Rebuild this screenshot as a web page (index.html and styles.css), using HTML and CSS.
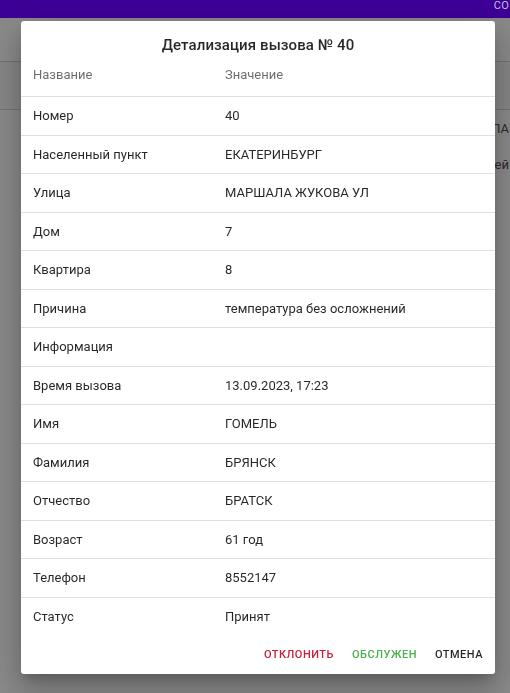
FILE: index.html
```html
<!DOCTYPE html>
<html lang="ru">
<head>
<meta charset="utf-8">
<title>Детализация вызова</title>
<link rel="stylesheet" href="styles.css">
</head>
<body>
<div class="page">
  <header class="appbar"><span class="appbar-user">СО</span></header>
  <div class="toolbar"></div>
  <div class="tabs"></div>
  <div class="bg-list">
    <div class="bg-row">ЛА</div>
    <div class="bg-row">сей</div>
  </div>
</div>

<div class="dialog" role="dialog">
  <h2 class="dialog-title">Детализация вызова № 40</h2>
  <table class="details">
    <thead>
      <tr><th class="col-name">Название</th><th>Значение</th></tr>
    </thead>
    <tbody>
      <tr><td>Номер</td><td>40</td></tr>
      <tr><td>Населенный пункт</td><td>ЕКАТЕРИНБУРГ</td></tr>
      <tr><td>Улица</td><td>МАРШАЛА ЖУКОВА УЛ</td></tr>
      <tr><td>Дом</td><td>7</td></tr>
      <tr><td>Квартира</td><td>8</td></tr>
      <tr><td>Причина</td><td>температура без осложнений</td></tr>
      <tr><td>Информация</td><td></td></tr>
      <tr><td>Время вызова</td><td>13.09.2023, 17:23</td></tr>
      <tr><td>Имя</td><td>ГОМЕЛЬ</td></tr>
      <tr><td>Фамилия</td><td>БРЯНСК</td></tr>
      <tr><td>Отчество</td><td>БРАТСК</td></tr>
      <tr><td>Возраст</td><td>61 год</td></tr>
      <tr><td>Телефон</td><td>8552147</td></tr>
      <tr><td>Статус</td><td>Принят</td></tr>
    </tbody>
  </table>
  <div class="actions">
    <button class="btn btn-reject">Отклонить</button>
    <button class="btn btn-done">Обслужен</button>
    <button class="btn btn-cancel">Отмена</button>
  </div>
</div>
</body>
</html>
```

FILE: styles.css
```css
* { box-sizing: border-box; }

html, body {
  margin: 0;
  padding: 0;
  height: 100%;
}

body {
  font-family: Roboto, "Liberation Sans", Arial, sans-serif;
  background: #8a8a8a;
  overflow: hidden;
}

.page {
  height: 100%;
  display: flex;
  flex-direction: column;
}

.appbar {
  height: 18px;
  background: #3e0098;
  display: flex;
  justify-content: flex-end;
  align-items: flex-start;
  overflow: hidden;
}

.appbar-user {
  color: #c9bfe0;
  font-size: 11px;
  line-height: 11px;
  margin-top: 0;
  margin-right: 1px;
  letter-spacing: 0.3px;
}

.toolbar {
  height: 44px;
  background: #8a8a8a;
  border-bottom: 1px solid #717171;
}

.tabs {
  height: 48px;
  background: #878787;
  border-bottom: 1px solid #747474;
}

.bg-list {
  display: flex;
  flex-direction: column;
  align-items: flex-end;
  padding-top: 10px;
  gap: 18px;
  color: #2a2a2a;
  font-size: 13px;
  line-height: 18px;
}

.bg-row {
  padding-right: 1px;
}

.dialog {
  position: fixed;
  left: 21px;
  top: 21px;
  width: 474px;
  background: #fff;
  border-radius: 3px;
  box-shadow: 0 8px 11px -5px rgba(0,0,0,0.2),
              0 18px 28px 2px rgba(0,0,0,0.14),
              0 7px 34px 6px rgba(0,0,0,0.12);
  display: flex;
  flex-direction: column;
}

.dialog-title {
  margin: 0;
  padding: 12px 18px 1px;
  font-size: 15px;
  line-height: 24px;
  font-weight: 500;
  text-align: center;
  color: rgba(0,0,0,0.85);
  letter-spacing: 0.1px;
}

.details {
  width: 100%;
  border-collapse: collapse;
  font-size: 13px;
  line-height: 17.5px;
  color: rgba(0,0,0,0.85);
}

.details th,
.details td {
  padding: 10px 12px;
  text-align: left;
  border-bottom: 1px solid #e0e0e0;
  font-weight: 400;
  height: 38.5px;
}

.details th {
  color: rgba(0,0,0,0.58);
  padding: 8px 12px 12px;
}

.details .col-name {
  width: 192px;
}

.details tbody tr:last-child td {
  border-bottom: none;
}

.actions {
  display: flex;
  justify-content: flex-end;
  padding: 6px;
  gap: 6px;
}

.btn {
  font-family: inherit;
  background: none;
  border: none;
  padding: 4px 6px;
  font-size: 11px;
  line-height: 18px;
  font-weight: 500;
  text-transform: uppercase;
  letter-spacing: 0.5px;
  cursor: pointer;
  border-radius: 3px;
}

.btn-reject { color: #cc1f3d; }
.btn-done { color: #4caf50; }
.btn-cancel { color: rgba(0,0,0,0.85); }
```
